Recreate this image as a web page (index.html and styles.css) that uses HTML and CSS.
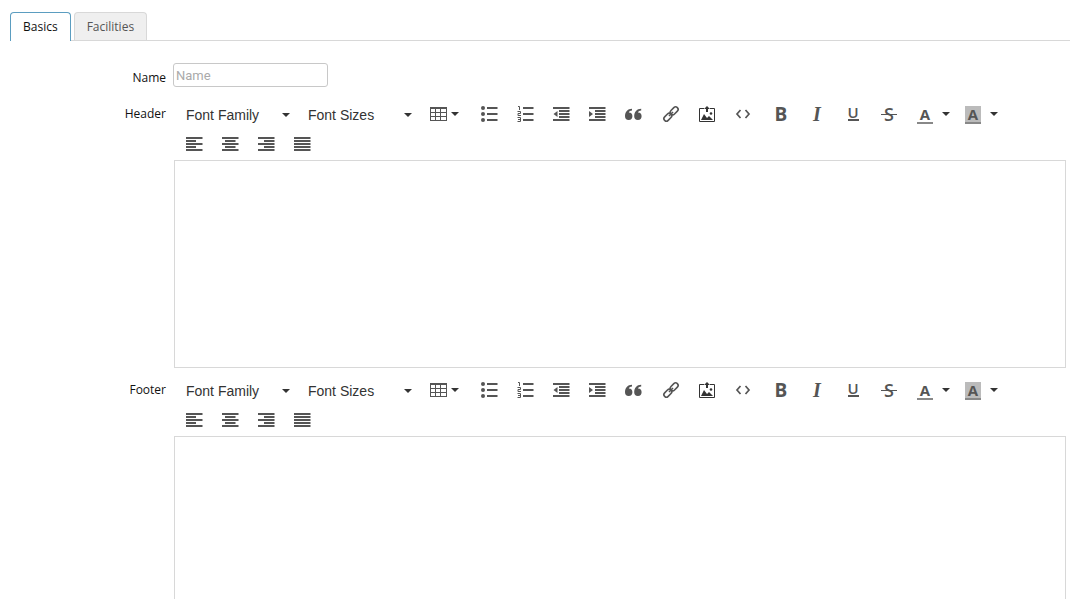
FILE: index.html
```html
<!DOCTYPE html>
<html lang="en">
<head>
<meta charset="utf-8">
<meta name="viewport" content="width=device-width, initial-scale=1">
<title>Basics</title>
<link rel="stylesheet" href="styles.css">
</head>
<body>
<svg class="sprite" aria-hidden="true">
  <symbol id="table" viewBox="0 0 16 16"><path fill-rule="evenodd" d="M0 1h17v14H0zM1 3v3h4V3zM6 3v3h4V3zM11 3v3h5V3zM1 7v3h4V7zM6 7v3h4V7zM11 7v3h5V7zM1 11v3h4v-3zM6 11v3h4v-3zM11 11v3h5v-3z"/></symbol>
  <symbol id="bullets" viewBox="0 0 16 16"><path d="M6 1h10.500v2H6zM6 7h10.500v2H6zM6 13h10.500v2H6z"/><circle cx="2" cy="2" r="2"/><circle cx="2" cy="8" r="2"/><circle cx="2" cy="14" r="2"/></symbol>
  <symbol id="numbers" viewBox="0 0 16 16"><path d="M6 1h10.500v2H6zM6 7h10.500v2H6zM6 13h10.500v2H6z"/><path class="line" d="M1 .5h1.500V4M.5 5.500H3.500v2H1v2h3M.5 11.500H3.500v4H.5M1 13.500h2.500"/></symbol>
  <symbol id="outdent" viewBox="0 0 16 16"><path d="M0 1h16.500v2H0zM6 4h10.500v2H6zM6 7h10.500v2H6zM6 10h10.500v2H6zM0 13h16.500v2H0zM4.500 5v6L.5 8z"/></symbol>
  <symbol id="indent" viewBox="0 0 16 16"><path d="M0 1h16.500v2H0zM6 4h10.500v2H6zM6 7h10.500v2H6zM6 10h10.500v2H6zM0 13h16.500v2H0zM0 5v6l4-3z"/></symbol>
  <symbol id="quote" viewBox="0 0 16 16"><path d="M3.800 6.500A3.700 3.700 0 1 1 0 10.200C0 6 2.500 2.700 7 2.700v1.800C5 4.700 4 5.500 3.800 6.500zM13 6.500A3.700 3.700 0 1 1 9.200 10.200C9.200 6 11.700 2.700 16.200 2.700v1.800c-2 .2-3 1-3.200 2z"/></symbol>
  <symbol id="link" viewBox="0 0 16 16"><g class="chain"><rect x="-1" y="5.500" width="9" height="5" rx="2.500" transform="rotate(-45 8 8)"/><rect x="8" y="5.500" width="9" height="5" rx="2.500" transform="rotate(-45 8 8)"/><path d="M6 10l4-4"/></g></symbol>
  <symbol id="image" viewBox="0 0 16 16"><path class="frame" d="M5 2.500H.5v13h15v-13H11"/><path d="M8 0l3 3H9v3H7V3H5zM2 14l3-6 3 4 2-2 4 4z"/><circle cx="12" cy="7.500" r="1.300"/></symbol>
  <symbol id="code" viewBox="0 0 16 16"><path class="angle" d="M5.500 4L2 8l3.500 4M10.500 4L14 8l-3.500 4"/></symbol>
  <symbol id="left" viewBox="0 0 16 16"><path d="M0 1h16.500v2H0zM0 4h10v2H0zM0 7h16.500v2H0zM0 10h10v2H0zM0 13h16.500v2H0z"/></symbol>
  <symbol id="center" viewBox="0 0 16 16"><path d="M0 1h16.500v2H0zM3 4h10.500v2H3zM0 7h16.500v2H0zM3 10h10.500v2H3zM0 13h16.500v2H0z"/></symbol>
  <symbol id="right" viewBox="0 0 16 16"><path d="M0 1h16.500v2H0zM6 4h10.500v2H6zM0 7h16.500v2H0zM6 10h10.500v2H6zM0 13h16.500v2H0z"/></symbol>
  <symbol id="justify" viewBox="0 0 16 16"><path d="M0 1h16.500v2H0zM0 4h16.500v2H0zM0 7h16.500v2H0zM0 10h16.500v2H0zM0 13h16.500v2H0z"/></symbol>
</svg>

<nav class="tabs" role="tablist">
  <button class="tab tab-active" type="button" role="tab" aria-selected="true">Basics</button>
  <button class="tab" type="button" role="tab" aria-selected="false">Facilities</button>
</nav>

<form class="form">
  <div class="row">
    <label class="label name-label" for="name">Name</label>
    <input class="name" id="name" type="text" placeholder="Name">
  </div>

  <div class="row">
    <label class="label" for="header">Header</label>
    <div class="editor">
      <div class="toolbar" role="toolbar" aria-label="Header formatting">
        <div class="group">
          <button class="tool picker" type="button">Font Family<span class="caret"></span></button>
          <button class="tool picker" type="button">Font Sizes<span class="caret"></span></button>
          <button class="tool split" type="button" aria-label="Table"><svg class="icon"><use href="#table"/></svg><span class="caret"></span></button>
        </div>
        <div class="group">
          <button class="tool" type="button" aria-label="Bullet list"><svg class="icon"><use href="#bullets"/></svg></button>
          <button class="tool" type="button" aria-label="Numbered list"><svg class="icon"><use href="#numbers"/></svg></button>
          <button class="tool" type="button" aria-label="Decrease indent"><svg class="icon"><use href="#outdent"/></svg></button>
          <button class="tool" type="button" aria-label="Increase indent"><svg class="icon"><use href="#indent"/></svg></button>
          <button class="tool" type="button" aria-label="Blockquote"><svg class="icon"><use href="#quote"/></svg></button>
        </div>
        <div class="group">
          <button class="tool" type="button" aria-label="Link"><svg class="icon"><use href="#link"/></svg></button>
          <button class="tool" type="button" aria-label="Upload image"><svg class="icon dark"><use href="#image"/></svg></button>
          <button class="tool" type="button" aria-label="Source code"><svg class="icon"><use href="#code"/></svg></button>
        </div>
        <div class="group">
          <button class="tool" type="button" aria-label="Bold"><span class="glyph bold">B</span></button>
          <button class="tool" type="button" aria-label="Italic"><span class="glyph italic">I</span></button>
          <button class="tool" type="button" aria-label="Underline"><span class="glyph underline">U</span></button>
          <button class="tool" type="button" aria-label="Strikethrough"><span class="glyph strike">S</span></button>
          <button class="tool color" type="button" aria-label="Text color"><span class="glyph swatch">A</span><span class="caret"></span></button>
          <button class="tool color" type="button" aria-label="Background color"><span class="glyph swatch filled">A</span><span class="caret"></span></button>
        </div>
        <div class="group">
          <button class="tool" type="button" aria-label="Align left"><svg class="icon"><use href="#left"/></svg></button>
          <button class="tool" type="button" aria-label="Align center"><svg class="icon"><use href="#center"/></svg></button>
          <button class="tool" type="button" aria-label="Align right"><svg class="icon"><use href="#right"/></svg></button>
          <button class="tool" type="button" aria-label="Justify"><svg class="icon"><use href="#justify"/></svg></button>
        </div>
      </div>
      <textarea class="area" id="header"></textarea>
    </div>
  </div>

  <div class="row">
    <label class="label" for="footer">Footer</label>
    <div class="editor">
      <div class="toolbar" role="toolbar" aria-label="Footer formatting">
        <div class="group">
          <button class="tool picker" type="button">Font Family<span class="caret"></span></button>
          <button class="tool picker" type="button">Font Sizes<span class="caret"></span></button>
          <button class="tool split" type="button" aria-label="Table"><svg class="icon"><use href="#table"/></svg><span class="caret"></span></button>
        </div>
        <div class="group">
          <button class="tool" type="button" aria-label="Bullet list"><svg class="icon"><use href="#bullets"/></svg></button>
          <button class="tool" type="button" aria-label="Numbered list"><svg class="icon"><use href="#numbers"/></svg></button>
          <button class="tool" type="button" aria-label="Decrease indent"><svg class="icon"><use href="#outdent"/></svg></button>
          <button class="tool" type="button" aria-label="Increase indent"><svg class="icon"><use href="#indent"/></svg></button>
          <button class="tool" type="button" aria-label="Blockquote"><svg class="icon"><use href="#quote"/></svg></button>
        </div>
        <div class="group">
          <button class="tool" type="button" aria-label="Link"><svg class="icon"><use href="#link"/></svg></button>
          <button class="tool" type="button" aria-label="Upload image"><svg class="icon dark"><use href="#image"/></svg></button>
          <button class="tool" type="button" aria-label="Source code"><svg class="icon"><use href="#code"/></svg></button>
        </div>
        <div class="group">
          <button class="tool" type="button" aria-label="Bold"><span class="glyph bold">B</span></button>
          <button class="tool" type="button" aria-label="Italic"><span class="glyph italic">I</span></button>
          <button class="tool" type="button" aria-label="Underline"><span class="glyph underline">U</span></button>
          <button class="tool" type="button" aria-label="Strikethrough"><span class="glyph strike">S</span></button>
          <button class="tool color" type="button" aria-label="Text color"><span class="glyph swatch">A</span><span class="caret"></span></button>
          <button class="tool color" type="button" aria-label="Background color"><span class="glyph swatch filled">A</span><span class="caret"></span></button>
        </div>
        <div class="group">
          <button class="tool" type="button" aria-label="Align left"><svg class="icon"><use href="#left"/></svg></button>
          <button class="tool" type="button" aria-label="Align center"><svg class="icon"><use href="#center"/></svg></button>
          <button class="tool" type="button" aria-label="Align right"><svg class="icon"><use href="#right"/></svg></button>
          <button class="tool" type="button" aria-label="Justify"><svg class="icon"><use href="#justify"/></svg></button>
        </div>
      </div>
      <textarea class="area" id="footer"></textarea>
    </div>
  </div>
</form>
</body>
</html>
```
FILE: styles.css
```css
* { box-sizing: border-box; }

html { height: 100%; overflow: hidden; }

body {
  height: 100%;
  margin: 0;
  overflow: hidden;
  background: #fff;
  color: #111;
  font: 12px/18px "Open Sans", sans-serif;
}

.sprite { display: none; }

.tabs {
  display: flex;
  gap: 3px;
  margin: 12px 0 0 10px;
  border-bottom: 1px solid #d8d8d8;
}

.tab {
  height: 28px;
  padding: 0 12px;
  border: 1px solid #d8d8d8;
  border-bottom: 0;
  border-radius: 4px 4px 0 0;
  background: #efefef;
  color: #555;
  font: inherit;
}

.tab-active {
  height: 29px;
  margin-bottom: -1px;
  border-color: #5b9dc0;
  background: #fff;
  color: #111;
  font-weight: 500;
}

.form {
  display: flex;
  flex-direction: column;
  padding: 22px 4px 0 0;
}

.row { display: flex; align-items: flex-start; }

.label {
  width: 166px;
  flex: none;
  margin-right: 8px;
  padding-top: 6px;
  font-weight: 500;
  text-align: right;
}

.name-label { margin-right: 7px; }

.name {
  width: 155px;
  height: 24px;
  margin-bottom: 12px;
  padding: 0 2px;
  border: 1px solid #c8c8c8;
  border-radius: 3px;
  font: 13px/18px Roboto, sans-serif;
}

.name::placeholder { color: #aaa; }

.editor { flex: 1; min-width: 0; }

.toolbar {
  display: flex;
  flex-wrap: wrap;
  column-gap: 2px;
  padding: 0 0 1px 2px;
}

.group { display: flex; }

.tool {
  display: flex;
  align-items: center;
  height: 30px;
  padding: 0 10px;
  border: 0;
  background: none;
  color: #333;
  font: 14px/20px "Liberation Sans", Arial, sans-serif;
}

.picker {
  justify-content: space-between;
  width: 122px;
  padding: 2px 8px 0 10px;
}

.split { width: 49px; gap: 5px; }

.color { width: 48px; gap: 9px; }

.caret {
  flex: none;
  border: 4px solid transparent;
  border-top-color: #333;
  border-bottom: 0;
}

.icon {
  width: 16px;
  height: 16px;
  flex: none;
  overflow: visible;
  fill: #555;
}

symbol { overflow: visible; }

.dark { fill: #333; }

.line { fill: none; stroke: #555; stroke-width: 1; }

.chain { fill: none; stroke: #555; stroke-width: 1.6; }

.frame { fill: none; stroke: #333; stroke-width: 1; }

.angle { fill: none; stroke: #555; stroke-width: 1.7; }

.glyph {
  width: 16px;
  height: 16px;
  flex: none;
  color: #555;
  font: bold 19px/16px "Open Sans", sans-serif;
  text-align: center;
}

.italic { font: italic bold 20px/16px "Liberation Serif", serif; }

.underline {
  background: linear-gradient(#555, #555) center bottom 1px / 11px 2px no-repeat;
  font: 600 15px/12px "Open Sans", sans-serif;
}

.strike {
  background: linear-gradient(#555, #555) center / 16px 1px no-repeat;
  font: 600 18px/16px "Open Sans", sans-serif;
}

.swatch {
  height: 18px;
  border-bottom: 2px solid #888;
  font: bold 15px/17px "Open Sans", sans-serif;
}

.color .glyph { margin-top: 2px; }

.filled { background: #bbb; }

.area {
  display: block;
  width: 100%;
  height: 208px;
  margin-bottom: 7px;
  padding: 8px;
  border: 1px solid #d8d8d8;
  resize: none;
}
```
